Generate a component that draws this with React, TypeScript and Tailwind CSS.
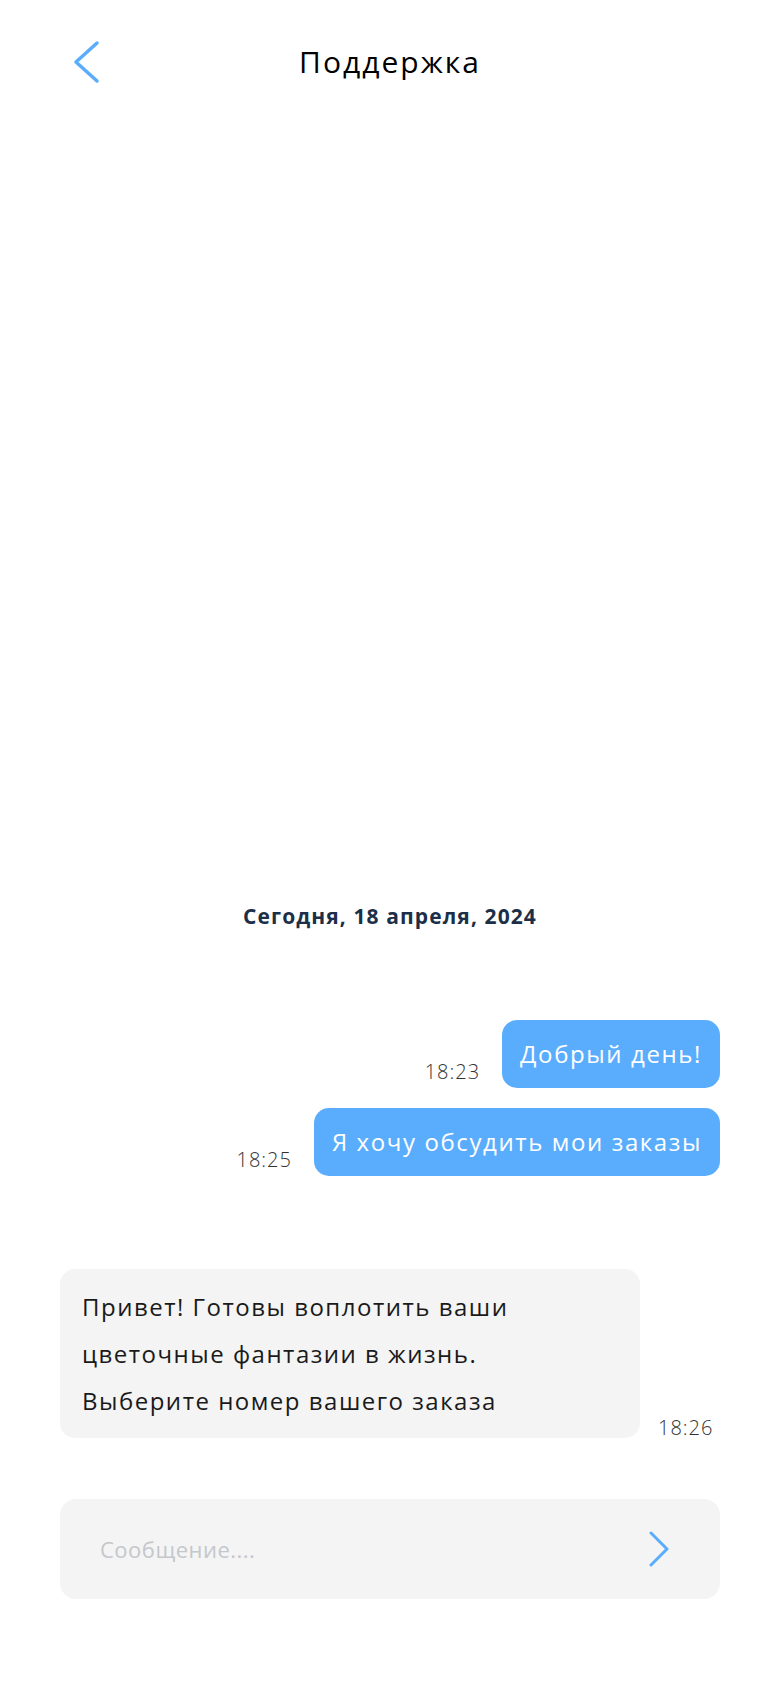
import { useState } from 'react';

type Msg = { id: number; text: string; time: string; mine: boolean };

const messages: Msg[] = [
  { id: 1, text: 'Добрый день!', time: '18:23', mine: true },
  { id: 2, text: 'Я хочу обсудить мои заказы', time: '18:25', mine: true },
];

function BackIcon() {
  return (
    <svg width="28" height="44" viewBox="0 0 28 44" fill="none">
      <path d="M25 3 L4 22 L25 41" stroke="#5aadfd" strokeWidth="3.5" strokeLinecap="round" strokeLinejoin="round" />
    </svg>
  );
}

function SendIcon() {
  return (
    <svg width="20" height="36" viewBox="0 0 20 36" fill="none">
      <path d="M2 2 L18 18 L2 34" stroke="#5aadfd" strokeWidth="3" strokeLinecap="round" strokeLinejoin="round" />
    </svg>
  );
}

export default function App() {
  const [text, setText] = useState('');

  return (
    <div className="flex h-screen flex-col bg-white font-['Open_Sans','Noto_Sans',sans-serif] text-black">
      {/* Шапка */}
      <header className="relative flex h-[122px] shrink-0 items-center justify-center">
        <button className="absolute left-[72px] top-[40px]" aria-label="Назад">
          <BackIcon />
        </button>
        <h1 className="text-[30px] font-medium tracking-[2px]">Поддержка</h1>
      </header>

      {/* Сообщения */}
      <main className="flex flex-1 flex-col justify-end px-[60px]">
        <div className="text-center text-[21px] leading-[28px] font-bold tracking-[1.1px] text-[#1c2f48]">
          Сегодня, 18 апреля, 2024
        </div>

        <div className="mt-[90px] flex flex-col gap-[20px]">
          {messages.map((m) => (
            <div key={m.id} className="flex items-end justify-end gap-[22px]">
              <span className="mb-[6px] text-[20px] leading-none font-light tracking-[1px] text-[#333]">{m.time}</span>
              <div className="flex h-[68px] items-center rounded-[15px] bg-[#5aadfd] px-[18px] text-[24px] tracking-[1.6px] text-white">
                {m.text}
              </div>
            </div>
          ))}
        </div>

        <div className="mt-[93px] flex items-end gap-[18px]">
          <div className="w-[580px] rounded-[15px] bg-[#f4f4f4] px-[22px] py-[14px] text-[24px] leading-[47px] tracking-[1.5px] text-[#1a1a1a]">
            Привет! Готовы воплотить ваши
            <br />
            цветочные фантазии в жизнь.
            <br />
            Выберите номер вашего заказа
          </div>
          <span className="text-[20px] leading-none font-light tracking-[1px] text-[#333]">18:26</span>
        </div>

        {/* Поле ввода */}
        <div className="mt-[61px] flex h-[100px] items-center rounded-[16px] bg-[#f4f4f4] pl-[40px] pr-[51px]">
          <input
            value={text}
            onChange={(e) => setText(e.target.value)}
            placeholder="Сообщение...."
            className="flex-1 bg-transparent text-[22px] tracking-[0.5px] text-black outline-none placeholder:text-[#c4c7cc]"
          />
          <button aria-label="Отправить">
            <SendIcon />
          </button>
        </div>
      </main>

      <div className="h-[89px] shrink-0" />
    </div>
  );
}
